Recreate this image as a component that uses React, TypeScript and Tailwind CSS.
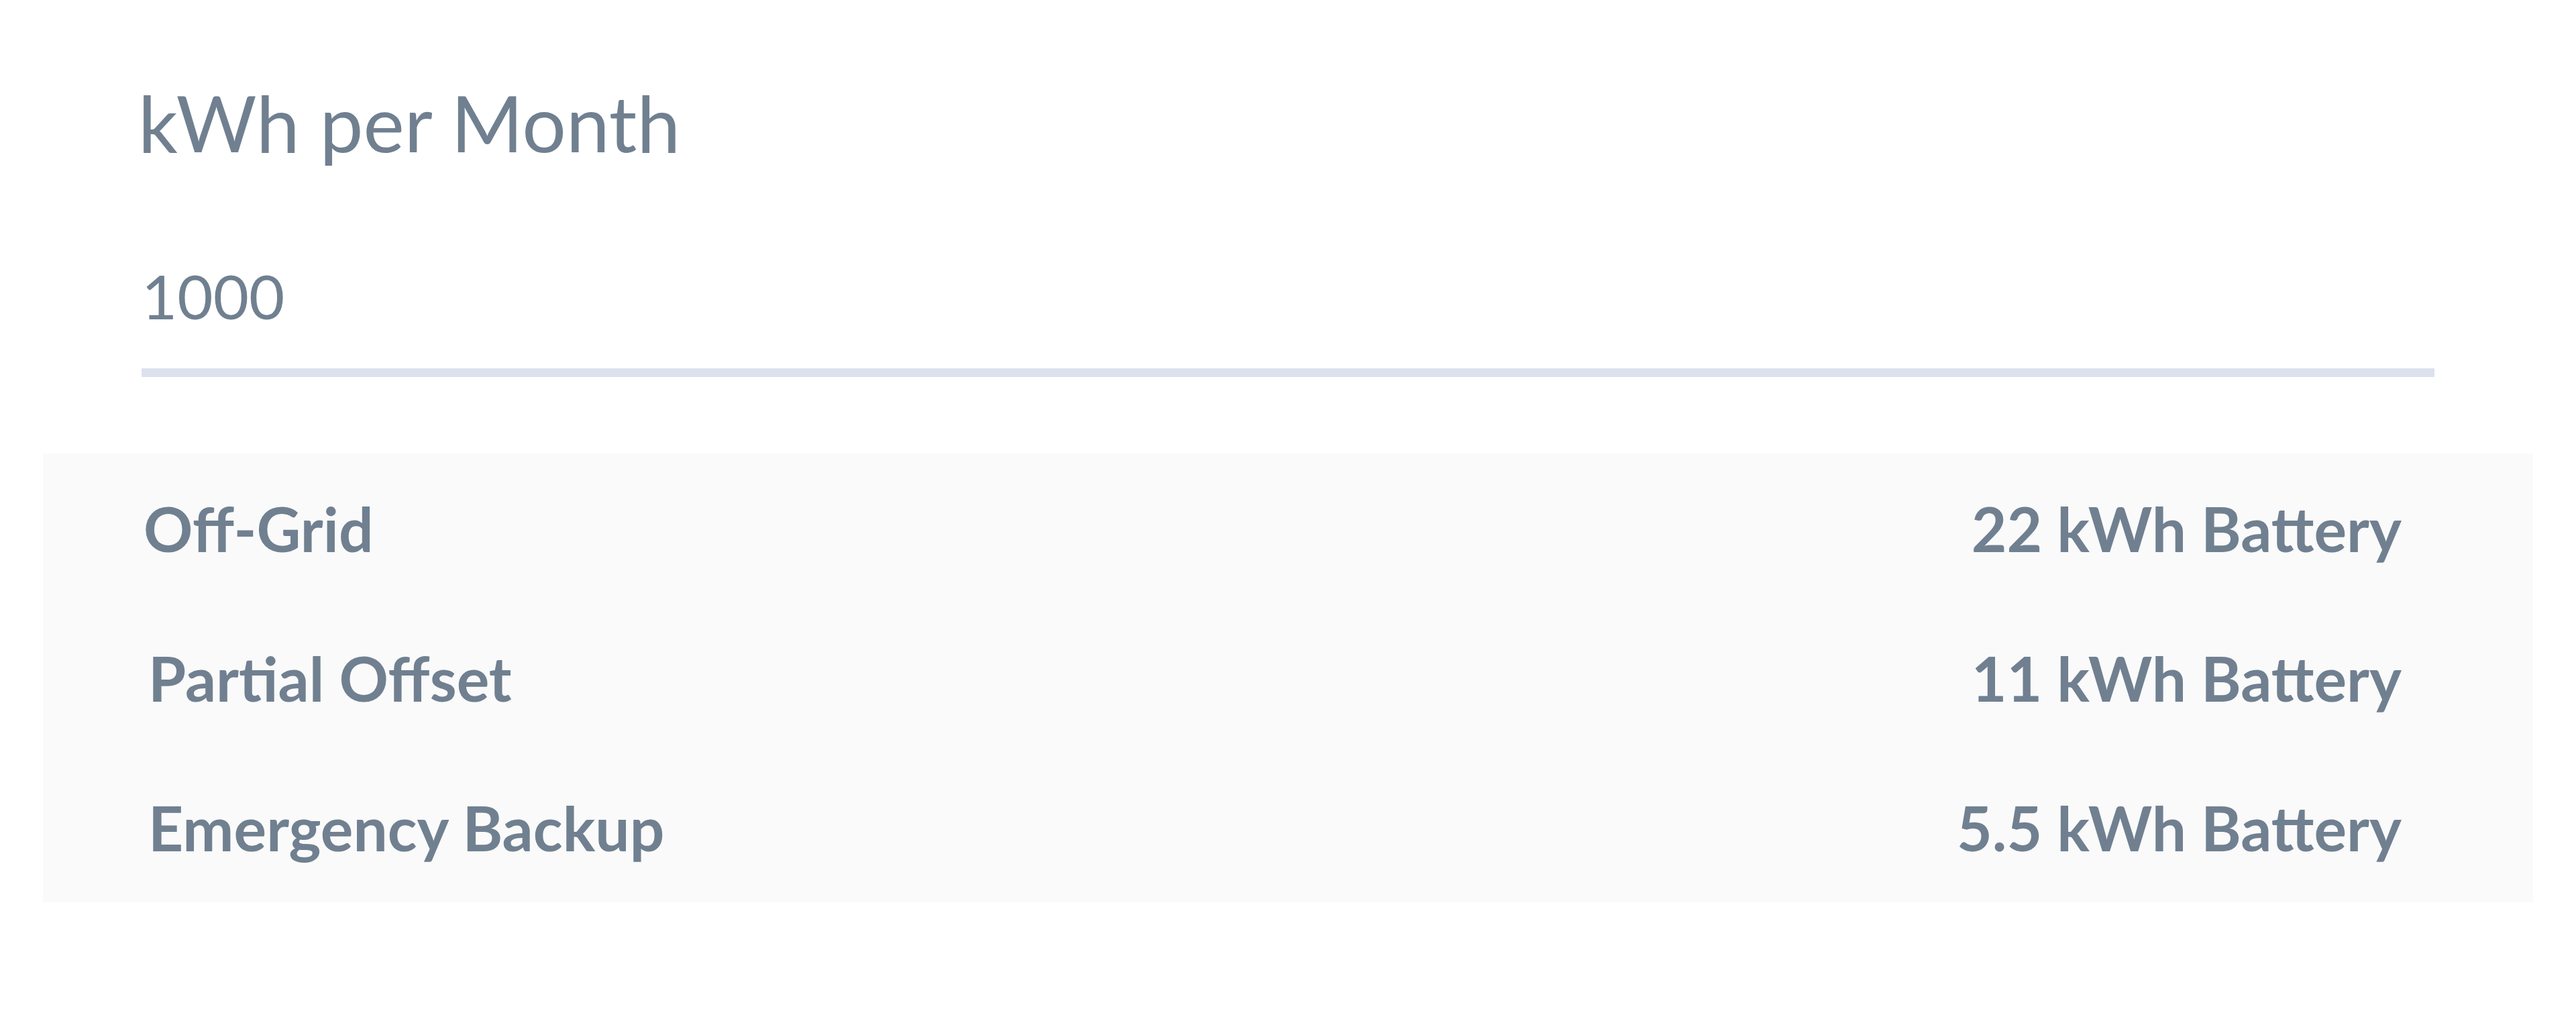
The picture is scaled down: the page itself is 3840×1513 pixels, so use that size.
import React from "react";

const options = [
  { label: "Off-Grid", battery: "22 kWh Battery", pad: "pl-[150px]" },
  { label: "Partial Offset", battery: "11 kWh Battery", pad: "pl-[157px]" },
  { label: "Emergency Backup", battery: "5.5 kWh Battery", pad: "pl-[157px]" },
];

const App: React.FC = () => {
  return (
    <div className="min-h-screen bg-white font-['Lato','Open_Sans',sans-serif] text-[#708090]">
      <div className="px-[211px] pt-[111px]">
        <label htmlFor="kwh" className="block text-[116px] leading-[143px] -ml-[5px]">
          kWh per Month
        </label>
        <input
          id="kwh"
          type="text"
          defaultValue="1000"
          className="mt-[131px] block w-full h-[177px] pb-[54px] pl-0 border-b-[13px] border-[#dbe2ee] bg-transparent text-[92px] leading-[110px] text-[#708090] outline-none"
        />
      </div>

      <div className="mx-[64px] mt-[114px] bg-[#fafafa]">
        {options.map((opt) => (
          <div
            key={opt.label}
            className={`flex h-[223px] items-center justify-between pr-[196px] text-[91px] font-bold leading-[223px] ${opt.pad}`}
          >
            <span>{opt.label}</span>
            <span>{opt.battery}</span>
          </div>
        ))}
      </div>
    </div>
  );
};

export default App;
